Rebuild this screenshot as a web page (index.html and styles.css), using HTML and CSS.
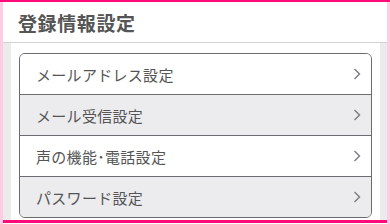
FILE: index.html
```html
<!DOCTYPE html>
<html lang="ja">
<head>
<meta charset="utf-8">
<link rel="stylesheet" href="styles.css">
</head>
<body>
<div class="topbar"></div>
<div class="page">
  <div class="header"><h1 class="title">登録情報設定</h1></div>
  <div class="content">
    <div class="inner">
      <ul class="card">
        <li class="row"><span class="label">メールアドレス設定</span><svg class="chev" width="8" height="12" viewBox="0 0 8 12"><polyline points="1.5,1 6.5,6 1.5,11" fill="none" stroke="#7a7a80" stroke-width="1.4"/></svg></li>
        <li class="row alt"><span class="label">メール受信設定</span><svg class="chev" width="8" height="12" viewBox="0 0 8 12"><polyline points="1.5,1 6.5,6 1.5,11" fill="none" stroke="#7a7a80" stroke-width="1.4"/></svg></li>
        <li class="row"><span class="label">声の機能･電話設定</span><svg class="chev" width="8" height="12" viewBox="0 0 8 12"><polyline points="1.5,1 6.5,6 1.5,11" fill="none" stroke="#7a7a80" stroke-width="1.4"/></svg></li>
        <li class="row alt"><span class="label">パスワード設定</span><svg class="chev" width="8" height="12" viewBox="0 0 8 12"><polyline points="1.5,1 6.5,6 1.5,11" fill="none" stroke="#7a7a80" stroke-width="1.4"/></svg></li>
      </ul>
    </div>
  </div>
  <div class="bottombar"></div>
</div>
</body>
</html>
```
FILE: styles.css
```css
html, body {
  margin: 0;
  padding: 0;
  background: #fff;
}
body {
  font-family: "Noto Sans CJK JP", "Noto Sans", sans-serif;
  color: #555;
}
.topbar {
  width: 390px;
  height: 2px;
  background: #ff0a78;
}
.page {
  width: 384px;
  height: 222px;
  border-left: 3px solid #ffcce4;
  border-right: 3px solid #ffcce4;
  display: flex;
  flex-direction: column;
}
.header {
  height: 40px;
  border-bottom: 1px solid #d2d2d2;
  display: flex;
  align-items: center;
  padding-left: 15px;
}
.title {
  margin: 0;
  font-size: 19px;
  font-weight: bold;
  color: #555;
  letter-spacing: 0.6px;
}
.content {
  height: 177px;
  background: #ebebeb;
  padding: 0 7px 0 8px;
  display: flex;
}
.inner {
  flex: 1;
  background: #fff;
  padding: 10px 8px 2px 8px;
}
.card {
  list-style: none;
  margin: 0;
  padding: 0;
  border: 1px solid #6b6b72;
  border-radius: 6px;
  overflow: hidden;
}
.row {
  height: 40px;
  display: flex;
  align-items: center;
  justify-content: space-between;
  padding: 0 10px 0 16px;
  background: #fff;
}
.row + .row {
  border-top: 1px solid #6b6b72;
}
.row.alt {
  background: #ececee;
}
.label {
  font-size: 15px;
  letter-spacing: 0.3px;
  color: #555;
}
.chev {
  display: block;
}
.bottombar {
  height: 3px;
  background: #ff0a78;
}
```
